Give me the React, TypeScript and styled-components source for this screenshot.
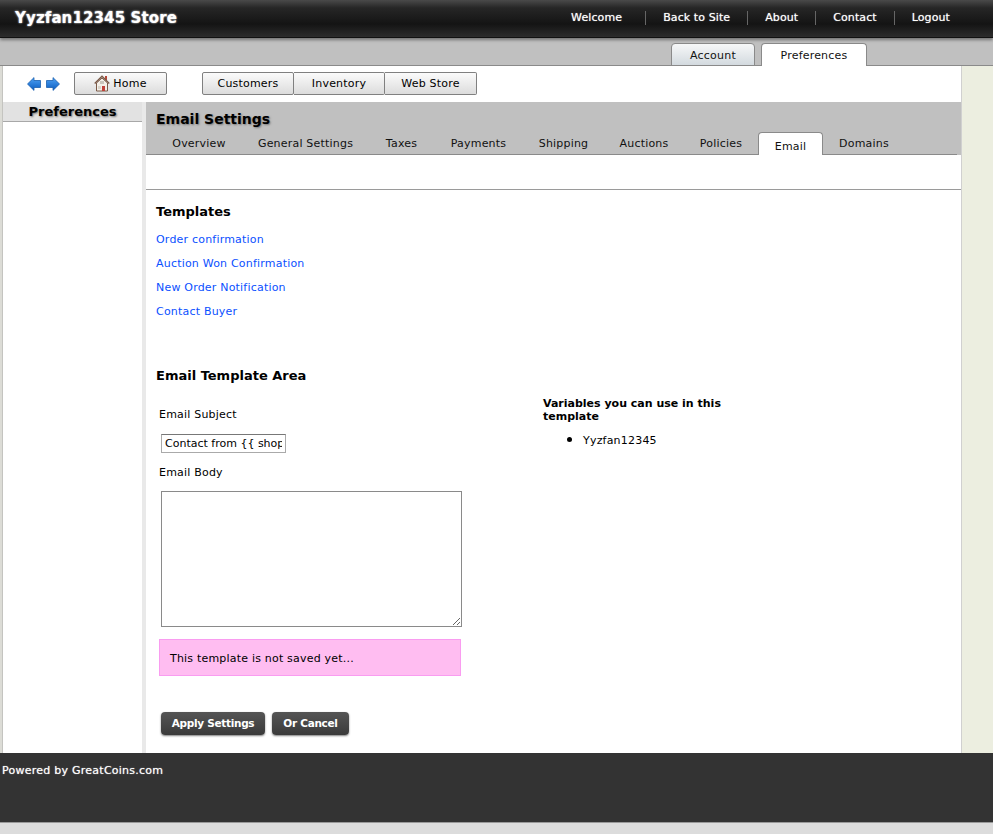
import React from "react";
import styled, { createGlobalStyle } from "styled-components";

const Global = createGlobalStyle`
  html, body { margin: 0; padding: 0; background: #dcdcdc; }
  body { font-family: "DejaVu Sans", Verdana, sans-serif; font-size: 11px; letter-spacing: 0.2px; color: #000; height: 834px; overflow: hidden; }
  * { box-sizing: border-box; }
`;

const Header = styled.header`
  height: 38px;
  display: flex;
  align-items: center;
  justify-content: space-between;
  padding: 0 26px 1px 15px;
  background: linear-gradient(#4a4a4a 0, #262626 8px, #141414 24px, #2c2c2c 37px);
  border-bottom: 1px solid #111;
  box-shadow: 0 2px 3px rgba(0, 0, 0, 0.4);
  position: relative;
  z-index: 2;
`;
const Brand = styled.div`
  color: #fff;
  font-size: 15px;
  font-weight: 700;
  letter-spacing: 0.12px;
  text-shadow: 0 0 2px #fff;
`;
const TopNav = styled.nav`
  display: flex;
  align-items: center;
`;
const TopLink = styled.a<{ $first?: boolean; $last?: boolean }>`
  color: #fff;
  font-size: 11px;
  letter-spacing: 0.1px;
  padding: 0 ${(p) => (p.$first ? 23 : 17)}px 0 ${(p) => (p.$first ? 0 : 17)}px;
  line-height: 14px;
  border-right: ${(p) => (p.$last ? "none" : "1px solid #666")};
  text-shadow: 0 0 1px rgba(255, 255, 255, 0.7);
`;
const TabBand = styled.div`
  height: 28px;
  background: #c0c0c0;
  border-bottom: 1px solid #8a8a8a;
  display: flex;
  justify-content: flex-end;
  align-items: flex-end;
  gap: 6px;
  padding-right: 126px;
`;
const TopTab = styled.div<{ $active?: boolean; $w: number }>`
  width: ${(p) => p.$w}px;
  height: 23px;
  margin-bottom: -1px;
  border: 1px solid #8a8a8a;
  border-bottom: ${(p) => (p.$active ? "none" : "1px solid #8a8a8a")};
  border-radius: 4px 4px 0 0;
  background: ${(p) => (p.$active ? "#fff" : "linear-gradient(#f6f7f8, #d3dadf)")};
  display: flex;
  align-items: center;
  justify-content: center;
  font-size: 11px;
  padding-top: 1px;
  color: #111;
`;
const Frame = styled.div`
  display: flex;
  height: 687px;
  background: #eceee0;
  padding-right: 31px;
`;
const Edge = styled.div`
  width: 3px;
  background: #dcdcd6;
  border-right: 1px solid #c4c4c0;
`;
const Page = styled.div`
  flex: 1;
  background: #fff;
  display: flex;
  flex-direction: column;
  border-right: 1px solid #d0d0d0;
`;
const Toolbar = styled.div`
  height: 36px;
  display: flex;
  align-items: flex-start;
  padding: 6px 0 0 24px;
`;
const Arrows = styled.div`
  display: flex;
  gap: 5px;
  margin-top: 5px;
  width: 47px;
`;
const ToolButton = styled.div<{ $w: number }>`
  width: ${(p) => p.$w}px;
  height: 23px;
  border: 1px solid #808080;
  border-radius: 2px;
  background: linear-gradient(#fbfbfb, #dcdcdc);
  display: flex;
  align-items: center;
  justify-content: center;
  font-size: 11px;
  gap: 3px;
  & + & {
    border-left: none;
    border-radius: 0 2px 2px 0;
  }
`;
const HomeText = styled.span`
  margin-top: -1px;
`;
const ButtonGroup = styled.div`
  display: flex;
  margin-left: 35px;
`;
const Body = styled.div`
  flex: 1;
  display: flex;
`;
const Sidebar = styled.aside`
  width: 139px;
`;
const SideTitle = styled.div`
  height: 20px;
  padding-top: 2px;
  background: #e2e2e2;
  border-bottom: 1px solid #a8a8a8;
  text-align: center;
  font-size: 13px;
  letter-spacing: 0;
  font-weight: 700;
  line-height: 16px;
  text-shadow: 1px 1px 2px #777;
`;
const Gutter = styled.div`
  width: 4px;
  background: #e9e9e9;
`;
const Main = styled.main`
  flex: 1;
  display: flex;
  flex-direction: column;
`;
const MainHead = styled.div`
  height: 53px;
  background: #c0c0c0;
  padding-top: 8px;
  display: flex;
  flex-direction: column;
  justify-content: space-between;
`;
const MainTitle = styled.h1`
  margin: 0 0 0 10px;
  font-size: 14px;
  letter-spacing: 0;
  line-height: 18px;
  font-weight: 700;
  text-shadow: 1px 1px 2px #777;
`;
const SubTabs = styled.div`
  display: flex;
  align-items: flex-end;
  height: 23px;
  padding-left: 10px;
  margin-right: 4px;
  border-bottom: 1px solid #8a8a8a;
`;
const SubTab = styled.div<{ $active?: boolean; $w: number }>`
  width: ${(p) => p.$w}px;
  height: 23px;
  margin-bottom: -1px;
  padding-top: 4px;
  text-align: center;
  font-size: 11px;
  line-height: 15px;
  color: #111;
  ${(p) =>
    p.$active
      ? `background:#fff;border:1px solid #8a8a8a;border-bottom:none;border-radius:4px 4px 0 0;padding-top:6px;`
      : ``}
`;
const Spacer = styled.div`
  height: 35px;
  border-bottom: 1px solid #9a9a9a;
`;
const Content = styled.div`
  flex: 1;
  padding: 13px 0 0 10px;
`;
const Heading = styled.h2`
  margin: 0;
  font-size: 13px;
  letter-spacing: 0;
  line-height: 18px;
  font-weight: 700;
`;
const TemplateLinks = styled.div`
  display: flex;
  flex-direction: column;
  gap: 10px;
  margin-top: 12px;
  margin-bottom: 48px;
`;
const TemplateLink = styled.a`
  color: #0a50ff;
  font-size: 11px;
  line-height: 14px;
`;
const Columns = styled.div`
  display: flex;
  margin-top: 14px;
`;
const FormCol = styled.div`
  width: 387px;
  padding: 9px 0 0 3px;
`;
const Label = styled.div`
  font-size: 11px;
  line-height: 14px;
`;
const Subject = styled.input`
  display: block;
  width: 125px;
  height: 19px;
  margin: 12px 0 13px 2px;
  padding: 0 3px;
  border: 1px solid #aaa;
  border-top-color: #777;
  font: 11px "DejaVu Sans", Verdana, sans-serif;
  color: #000;
  outline: none;
`;
const BodyArea = styled.textarea`
  display: block;
  width: 301px;
  height: 136px;
  margin: 11px 0 12px 2px;
  border: 1px solid #8a8a8a;
  background: #fff;
  outline: none;
`;
const Notice = styled.div`
  width: 302px;
  height: 37px;
  background: #ffbdf1;
  border: 1px solid #f99cf0;
  padding: 0 0 0 10px;
  line-height: 37px;
  font-size: 11px;
`;
const Actions = styled.div`
  display: flex;
  gap: 7px;
  margin: 36px 0 0 2px;
`;
const ActionButton = styled.div<{ $w: number }>`
  width: ${(p) => p.$w}px;
  height: 23px;
  padding-bottom: 1px;
  border-radius: 4px;
  background: linear-gradient(#555, #3a3a3a);
  box-shadow: 0 1px 2px rgba(0, 0, 0, 0.5);
  color: #fff;
  font-size: 10.5px;
  letter-spacing: -0.3px;
  font-weight: 700;
  display: flex;
  align-items: center;
  justify-content: center;
`;
const VarCol = styled.div`
  width: 200px;
  margin-top: -2px;
`;
const VarTitle = styled.div`
  font-size: 11px;
  letter-spacing: 0;
  font-weight: 700;
  line-height: 13px;
`;
const VarList = styled.ul`
  margin: 9px 0 0;
  padding: 0 0 0 40px;
  font-size: 11px;
  line-height: 14px;
  li::marker {
    font-size: 15px;
  }
`;
const Footer = styled.footer`
  height: 70px;
  background: #333;
  border-bottom: 1px solid #999;
  color: #fff;
  padding: 11px 0 0 2px;
  font-size: 11px;
  letter-spacing: 0.25px;
  line-height: 14px;
  text-shadow: 0 0 1px rgba(255, 255, 255, 0.7);
`;

const Arrow = ({ flip }: { flip?: boolean }) => (
  <svg width="14" height="14" viewBox="0 0 14 14" style={flip ? { transform: "scaleX(-1)" } : undefined}>
    <defs>
      <linearGradient id="ar" x1="0" y1="0" x2="0" y2="1">
        <stop offset="0" stopColor="#4fa3f5" />
        <stop offset="1" stopColor="#0a5bc0" />
      </linearGradient>
    </defs>
    <path d="M0.5 7 L7 0.6 V3.5 H13.5 V10.5 H7 V13.4 Z" fill="url(#ar)" stroke="#1a5fae" strokeWidth="0.8" />
  </svg>
);

const HomeIcon = () => (
  <svg width="16" height="17" viewBox="0 0 16 17">
    <rect x="11" y="1" width="2" height="4" fill="#b5483a" />
    <path d="M2.5 8 V16 H13.5 V8 L8 3 Z" fill="#f3efe8" stroke="#7a5a48" strokeWidth="1" />
    <path d="M0.7 8.5 L8 1.2 L15.3 8.5" fill="none" stroke="#7a5a48" strokeWidth="1.4" />
    <rect x="6" y="6" width="4" height="3" fill="#c9c4bb" />
    <rect x="8" y="11" width="3" height="5" fill="#c0413a" />
    <rect x="4" y="11" width="3" height="3" fill="#d9d4ca" />
  </svg>
);

const subTabs: [string, number][] = [
  ["Overview", 86],
  ["General Settings", 127],
  ["Taxes", 65],
  ["Payments", 89],
  ["Shipping", 81],
  ["Auctions", 80],
  ["Policies", 74],
  ["Email", 65],
  ["Domains", 82],
];
const templates = ["Order confirmation", "Auction Won Confirmation", "New Order Notification", "Contact Buyer"];

export default function App() {
  return (
    <>
      <Global />
      <Header>
        <Brand>Yyzfan12345 Store</Brand>
        <TopNav>
          <TopLink $first>Welcome</TopLink>
          <TopLink>Back to Site</TopLink>
          <TopLink>About</TopLink>
          <TopLink>Contact</TopLink>
          <TopLink $last>Logout</TopLink>
        </TopNav>
      </Header>
      <TabBand>
        <TopTab $w={84}>Account</TopTab>
        <TopTab $w={106} $active>Preferences</TopTab>
      </TabBand>
      <Frame>
        <Edge />
        <Page>
          <Toolbar>
            <Arrows>
              <Arrow />
              <Arrow flip />
            </Arrows>
            <ToolButton $w={93}>
              <HomeIcon />
              <HomeText>Home</HomeText>
            </ToolButton>
            <ButtonGroup>
              <ToolButton $w={92}>Customers</ToolButton>
              <ToolButton $w={91}>Inventory</ToolButton>
              <ToolButton $w={92}>Web Store</ToolButton>
            </ButtonGroup>
          </Toolbar>
          <Body>
            <Sidebar>
              <SideTitle>Preferences</SideTitle>
            </Sidebar>
            <Gutter />
            <Main>
              <MainHead>
                <MainTitle>Email Settings</MainTitle>
                <SubTabs>
                  {subTabs.map(([t, w]) => (
                    <SubTab key={t} $w={w} $active={t === "Email"}>{t}</SubTab>
                  ))}
                </SubTabs>
              </MainHead>
              <Spacer />
              <Content>
                <Heading>Templates</Heading>
                <TemplateLinks>
                  {templates.map((t) => (
                    <TemplateLink key={t}>{t}</TemplateLink>
                  ))}
                </TemplateLinks>
                <Heading>Email Template Area</Heading>
                <Columns>
                  <FormCol>
                    <Label>Email Subject</Label>
                    <Subject defaultValue="Contact from {{ shop }}" />
                    <Label>Email Body</Label>
                    <BodyArea />
                    <Notice>This template is not saved yet...</Notice>
                    <Actions>
                      <ActionButton $w={104}>Apply Settings</ActionButton>
                      <ActionButton $w={77}>Or Cancel</ActionButton>
                    </Actions>
                  </FormCol>
                  <VarCol>
                    <VarTitle>Variables you can use in this template</VarTitle>
                    <VarList>
                      <li>Yyzfan12345</li>
                    </VarList>
                  </VarCol>
                </Columns>
              </Content>
            </Main>
          </Body>
        </Page>
      </Frame>
      <Footer>Powered by GreatCoins.com</Footer>
    </>
  );
}
